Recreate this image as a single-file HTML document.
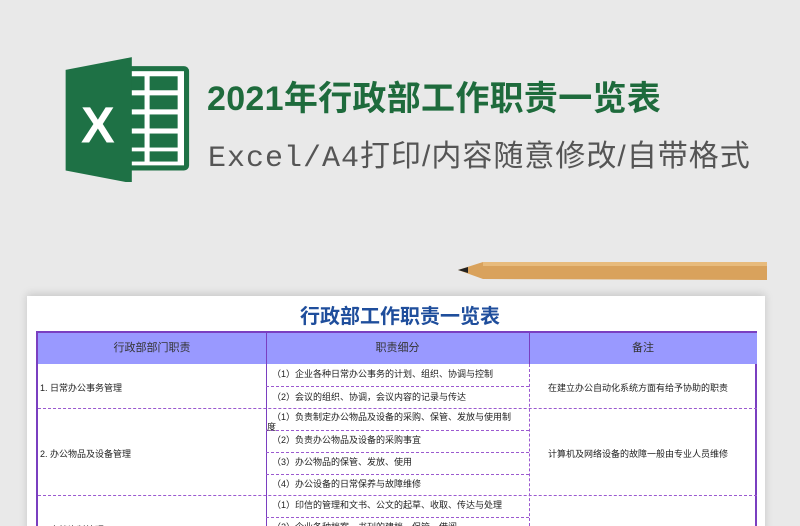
<!DOCTYPE html>
<html><head><meta charset="utf-8"><style>
*{margin:0;padding:0;box-sizing:border-box}
html,body{width:800px;height:526px;overflow:hidden}
body{background:#e9e9e9;font-family:"Liberation Sans","Noto Sans CJK SC",sans-serif;position:relative}
.t1{position:absolute;left:207px;top:71px;font-size:34px;font-weight:bold;color:#1e6b3c;letter-spacing:0.3px}
.t2{position:absolute;left:208px;top:131px;font-size:30px;color:#555;letter-spacing:1px}
.paper{position:absolute;left:27px;top:296px;width:738px;height:240px;background:#fff;box-shadow:0 -2px 8px rgba(0,0,0,.15)}
.ttl{position:absolute;left:0;width:800px;top:300px;text-align:center;font-size:20px;font-weight:bold;color:#1f4e9c}
.tb{position:absolute;left:36px;top:331px;width:721px;height:200px;border:2px solid #7a3fc0;border-bottom:none}
.hd{position:absolute;top:0;height:31px;background:#9999ff;font-size:11px;color:#333;text-align:center;line-height:31px}
.vl{position:absolute;top:0;bottom:0;border-left:1px solid #7a3fc0}
.dl{position:absolute;border-top:1px dashed #9b59d0}
.dv{position:absolute;border-left:1px dashed #9b59d0}
.c{position:absolute;font-size:9px;color:#222;white-space:nowrap}
</style></head><body>
<svg style="position:absolute;left:58px;top:52px" width="140" height="130" viewBox="0 0 110 100">
<rect x="40" y="10" width="63" height="82" rx="4" fill="#1e7145"/>
<rect x="44" y="14" width="55" height="74" fill="#fff"/>
<g fill="#1e7145"><rect x="48" y="18" width="20" height="11"/><rect x="72" y="18" width="22" height="11"/><rect x="48" y="33" width="20" height="11"/><rect x="72" y="33" width="22" height="11"/><rect x="48" y="48" width="20" height="11"/><rect x="72" y="48" width="22" height="11"/><rect x="48" y="63" width="20" height="11"/><rect x="72" y="63" width="22" height="11"/><rect x="48" y="77" width="20" height="8"/><rect x="72" y="77" width="22" height="8"/></g>
<polygon points="6,13 58,3 58,102 6,92" fill="#1e7145"/>
<text x="18" y="70" font-family="Liberation Sans" font-weight="bold" font-size="40" fill="#fff">X</text>
</svg>
<div class="t1">2021年行政部工作职责一览表</div>
<div class="t2"><span style="font-family:'Liberation Mono','Noto Sans CJK SC',monospace">Excel/A4</span>打印/内容随意修改/自带格式</div>
<svg style="position:absolute;left:455px;top:259px" width="315" height="25"><polygon points="3,11 28,3 312,3 312,21 28,20" fill="#d9a25c"/><rect x="28" y="3" width="284" height="4" fill="#e8bb7c"/><polygon points="3,11 13,8 13,14" fill="#222"/></svg>
<div class="paper"></div>
<div class="ttl">行政部工作职责一览表</div>
<div class="tb">
<div class="hd" style="left:0;width:228px">行政部部门职责</div>
<div class="hd" style="left:228px;width:263px">职责细分</div>
<div class="hd" style="left:491px;width:228px">备注</div>
<div class="vl" style="left:228px"></div><div class="vl" style="left:491px;top:0;height:31px"></div>
<div class="dv" style="left:491px;top:31px;bottom:0"></div>
<div class="dl" style="left:0;width:719px;top:75px"></div>
<div class="dl" style="left:0;width:719px;top:162px"></div>
<div class="dl" style="left:228px;width:263px;top:53px"></div>
<div class="dl" style="left:228px;width:263px;top:97px"></div>
<div class="dl" style="left:228px;width:263px;top:119px"></div>
<div class="dl" style="left:228px;width:263px;top:141px"></div>
<div class="dl" style="left:228px;width:263px;top:184px"></div>
<div class="c" style="left:2px;top:48px">1. 日常办公事务管理</div>
<div class="c" style="left:2px;top:114px">2. 办公物品及设备管理</div>
<div class="c" style="left:2px;top:190px">3. 文档资料管理</div>
<div class="c" style="left:234px;top:34px">（1）企业各种日常办公事务的计划、组织、协调与控制</div>
<div class="c" style="left:234px;top:57px">（2）会议的组织、协调，会议内容的记录与传达</div>
<div class="c" style="left:234px;top:77px">（1）负责制定办公物品及设备的采购、保管、发放与使用制</div>
<div class="c" style="left:229px;top:87px">度</div>
<div class="c" style="left:234px;top:100px">（2）负责办公物品及设备的采购事宜</div>
<div class="c" style="left:234px;top:122px">（3）办公物品的保管、发放、使用</div>
<div class="c" style="left:234px;top:144px">（4）办公设备的日常保养与故障维修</div>
<div class="c" style="left:234px;top:165px">（1）印信的管理和文书、公文的起草、收取、传达与处理</div>
<div class="c" style="left:234px;top:187px">（2）企业各种档案、书刊的建档、保管、借阅</div>
<div class="c" style="left:510px;top:48px">在建立办公自动化系统方面有给予协助的职责</div>
<div class="c" style="left:510px;top:114px">计算机及网络设备的故障一般由专业人员维修</div>
</div>
</body></html>
